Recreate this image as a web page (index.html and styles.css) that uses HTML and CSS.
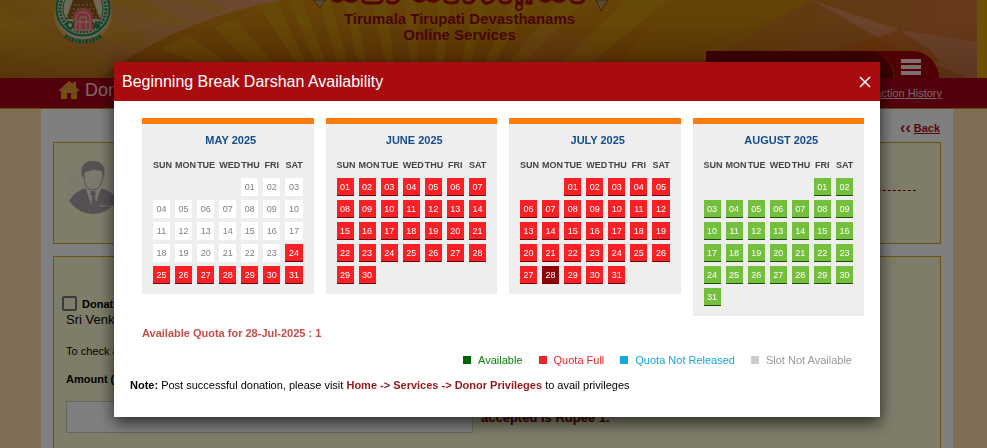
FILE: index.html
```
<!doctype html>
<html lang="en">
<head>
    <title>Tirumala Tirupati Devasthanams Online Services</title>
    <meta charset="utf-8">
    <link rel="stylesheet" href="styles.css">
</head>
<body>
    <!-- banner -->
    <header class="banner">
        <svg class="banner-bg" viewBox="0 0 987 78" preserveAspectRatio="none" aria-hidden="true">
            <defs>
                <linearGradient id="base" x1="0" y1="0" x2="0" y2="1">
                    <stop offset="0" stop-color="#d0880e"/>
                    <stop offset="1" stop-color="#b8680c"/>
                </linearGradient>
                <linearGradient id="left" x1="0" y1="0" x2="1" y2="0">
                    <stop offset="0" stop-color="#c88c1c"/>
                    <stop offset="1" stop-color="#dc906c"/>
                </linearGradient>
                <linearGradient id="right" x1="0" y1="0" x2="1" y2="0">
                    <stop offset="0" stop-color="#b8740c"/>
                    <stop offset="1" stop-color="#d07438"/>
                </linearGradient>
                <linearGradient id="shade" x1="0" y1="0" x2="0" y2="1">
                    <stop offset="0.3" stop-color="#802c00" stop-opacity="0"/>
                    <stop offset="1" stop-color="#802c00" stop-opacity="0.35"/>
                </linearGradient>
            </defs>
            <rect width="987" height="78" fill="url(#base)"/>
            <!-- rays -->
            <g fill="#d09c10" opacity="0.6">
                <path d="M160 48L188 36L230 64H200z"/>
                <path d="M214 27L236 19L274 64H250z"/>
                <path d="M256 0H276L306 64H296z"/>
                <path d="M288 0H302L326 64H316z"/>
                <path d="M318 0H330L348 64H338z"/>
                <path d="M344 0H354L366 64H358z"/>
                <path d="M372 0H386L394 64H386z"/>
                <path d="M404 0H416L418 64H410z"/>
                <path d="M438 0H450L444 64H436z"/>
                <path d="M474 0H488L470 64H462z"/>
                <path d="M514 0H532L494 64H484z"/>
                <path d="M560 0H584L524 64H508z"/>
                <path d="M626 0H668L590 64H560z"/>
            </g>
            <path d="M0 0H282Q180 18 100 78H0z" fill="url(#left)"/>
            <g fill="#d0981c" opacity="0.5">
                <path d="M0 12L0 50L76 78H114L118 64z"/>
                <path d="M22 0H76L150 40L134 52z"/>
                <path d="M108 0H140L190 22L176 28z"/>
                <path d="M176 0H204L230 10L216 14z"/>
            </g>
            <path d="M620 64Q720 44 812 0H987V78H620z" fill="url(#right)"/>
            <path d="M668 0H812L700 64H620z" fill="#c8860c" opacity="0.55"/>
            <path d="M812 0L900 30L987 44V78H968L900 50z" fill="#dc9068" opacity="0.7"/>
            <path d="M900 30L800 62H940L930 50z" fill="#c8600c" opacity="0.6"/>
            <path d="M530 64Q512 48 528 34Q556 20 570 40Q584 28 602 64H592Q584 44 572 56L560 64z" fill="#d88040" opacity="0.35"/>
            <rect width="987" height="78" fill="url(#shade)"/>
            <rect x="977" width="10" height="78" fill="#d89c10"/>
        </svg>

        <svg class="seal" width="60" height="46" viewBox="0 0 60 46" role="img" aria-label="TTD seal">
            <circle cx="30" cy="14" r="29" fill="#e8c48c" opacity="0.5"/>
            <circle cx="30" cy="12" r="27" fill="#d9c9ac"/>
            <circle cx="30" cy="9" r="26.5" fill="none" stroke="#168a58" stroke-width="2"/>
            <circle cx="30" cy="9" r="23" fill="none" stroke="#168a58" stroke-width="3" stroke-dasharray="2 1.4"/>
            <circle cx="30" cy="9" r="20" fill="#e0cfae" stroke="#168a58"/>
            <path d="M20 0h20l7 19H13z" fill="#8c5a1c"/>
            <path d="M17 5h26M16 9h28M15 13h30M14 17h32" stroke="#dca858" stroke-dasharray="2 2"/>
            <path d="M20 31V18q1-10 10-10t10 10v13z" fill="#e8666c"/>
            <path d="M23 29V18q1-6 7-6t7 6v11M27 29V17h6v12M24 22h12M19 30h22" fill="none" stroke="#ffc6ae"/>
            <circle cx="17" cy="25" r="3" fill="#f0dcb8" stroke="#168a58" stroke-width="2"/>
            <path d="M43 21v7m-3-5q3 6 7-1m-7 5h7" fill="none" stroke="#168a58" stroke-width="2"/>
            <path d="M12 36Q30 47 48 36" fill="none" stroke="#168a58" stroke-width="4" stroke-dasharray="3 1 2 1"/>
        </svg>

        <div class="brand">
            <svg class="crest" width="300" height="11" viewBox="0 0 300 11" aria-hidden="true">
                <g fill="none" stroke="#a00c14" stroke-width="3">
                    <path d="M20-3q7 8 14 1q7 7 14 0M54-2q-3 5 4 5h8q7 0 6-5M78-2q-2 5 4 5t7-5M102-3q7 8 14 1q7 7 14 0M136-2q-3 5 5 5t7-5M154-2q-1 5 4 5t7-5"/>
                    <path d="M172-2q1 6 6 5t6-5M190-2q-1 5 5 5t6-5M207-2v5h5v-5M217-2v5h4v-5M228-3q7 8 14 1q7 7 14 0M262-2q-2 5 5 5t7-5"/>
                </g>
                <circle cx="209" cy="7" r="3" fill="none" stroke="#a00c14" stroke-width="2"/>
                <path d="M3 0h12l-5 8zM286 0h12l-7 11z" fill="#b89060" stroke="#7c4c1c"/>
            </svg>
            <div class="brand-name">Tirumala Tirupati Devasthanams</div>
            <div class="brand-name">Online Services</div>
        </div>

        <nav class="menu-tab">
            <span class="menu-user"></span>
            <button class="menu-btn" aria-label="Menu"><i></i><i></i><i></i></button>
        </nav>
    </header>

    <!-- title bar -->
    <div class="title-bar">
        <svg width="22" height="18" viewBox="0 0 22 18" aria-hidden="true">
            <path d="M11 0L0 10h3v8h6v-6h4v6h6v-8h3l-4-4V1h-3v2z" fill="#e09c30"/>
        </svg>
        <h1>Donation</h1>
        <a class="history" href="#">Transaction History</a>
    </div>

    <main class="content">
        <div class="back"><span>‹‹</span><a href="#">Back</a></div>

        <section class="panel donor">
            <svg width="54" height="60" viewBox="0 0 54 60" role="img" aria-label="Donor">
                <circle cx="26" cy="30" r="27" fill="#f4f4dc" opacity="0.6"/>
                <path d="M3 43Q9 33 20 30L27 53L35 30Q47 33 51 43Q41 56 27 56T3 43z" fill="#aca0a4"/>
                <path d="M20 30l7 4l8-4l-8 23z" fill="#eeeedc"/>
                <path d="M25 33h4l1 3l-1 2l2 14l-3 4l-3-4l1-14l-2-2z" fill="#aca0a4"/>
                <path d="M18 16q0 16 9 16t10-16l-2-5H20z" fill="#f4f4dc" stroke="#aca0a4"/>
                <path d="M16 20Q13 3 27 3T38 20l-2-8q-5 2-8-1q-4 3-9 3z" fill="#aca0a4"/>
                <path d="M33 48h14M41 52h4" stroke="#eeeedc"/>
            </svg>
            <span class="dash"></span>
        </section>

        <section class="panel form">
            <label class="scheme"><input type="checkbox"> Donation to</label>
            <p class="trust">Sri Venkateswara Trust</p>
            <p class="check">To check availability</p>
            <label class="amount" for="amount">Amount (INR)</label>
            <div class="amount-row">
                <input type="text" id="amount">
                <span class="hint">accepted is Rupee 1.</span>
            </div>
        </section>
    </main>

    <!-- availability popup -->
    <div class="overlay">
        <div class="modal" role="dialog" aria-labelledby="modal-title">
            <div class="modal-head">
                <h2 id="modal-title">Beginning Break Darshan Availability</h2>
                <button class="close" aria-label="Close">
                    <svg width="12" height="12" viewBox="0 0 12 12"><path d="M1 1l10 10M11 1L1 11" stroke="#fff" stroke-width="1.5"/></svg>
                </button>
            </div>
            <div class="modal-body">
                <div class="calendars" id="calendars"></div>
                <p class="quota">Available Quota for 28-Jul-2025 : 1</p>
                <ul class="legend">
                    <li class="l-available">Available</li>
                    <li class="l-full">Quota Full</li>
                    <li class="l-pending">Quota Not Released</li>
                    <li class="l-none">Slot Not Available</li>
                </ul>
                <p class="note"><b>Note:</b> Post successful donation, please visit <b class="path">Home -&gt; Services -&gt; Donor Privileges</b> to avail privileges</p>
            </div>
        </div>
    </div>

    <script src="script.js"></script>
</body>
</html>
```

FILE: styles.css
```
* {
    box-sizing: border-box;
}

body {
    display: flex;
    flex-direction: column;
    margin: 0;
    font-family: "Liberation Sans", Arial, sans-serif;
    font-size: 11px;
    color: #000;
    background: #ffdeac;
    min-height: 100vh;
}

h1, h2, p, ul {
    margin: 0;
    padding: 0;
    font-weight: normal;
}

button {
    font-family: inherit;
    border: 0;
    padding: 0;
    cursor: pointer;
}

/* banner */
.banner {
    position: relative;
    display: grid;
    grid-template-columns: 1fr auto 1fr;
    height: 78px;
    overflow: hidden;
}

.banner-bg {
    position: absolute;
    inset: 0;
    width: 100%;
    height: 100%;
}

.seal {
    position: relative;
    margin-left: 53px;
}

.brand {
    position: relative;
    text-align: center;
    margin-right: 68px;
}

.crest {
    display: block;
}

.brand-name {
    font-size: 15px;
    font-weight: bold;
    line-height: 16px;
    color: #900c10;
}

.menu-tab {
    position: relative;
    display: flex;
    justify-self: end;
    align-self: end;
    width: 233px;
    height: 27px;
    margin-right: 48px;
    background: #a00008;
    border-radius: 0 32px 0 16px;
}

.menu-user {
    flex: 1;
    background: #780008;
    border-right: 1px solid #a8483c;
    border-radius: 0 32px 0 16px;
}

.menu-btn {
    width: 44px;
    padding-top: 6px;
    background: none;
}

.menu-btn i {
    display: block;
    width: 20px;
    height: 4px;
    margin-bottom: 2px;
    margin-left: 6px;
    background: #ffdcdc;
}

/* title bar */
.title-bar {
    display: flex;
    align-items: center;
    height: 31px;
    padding: 0 45px 6px 58px;
    background: #a80018;
    border-bottom: 1px solid #d89020;
}

.title-bar h1 {
    margin-left: 5px;
    font-size: 18px;
    color: #f0d0d4;
}

.history {
    margin-left: auto;
    padding-top: 6px;
    color: #f0d0d4;
}

/* page */
.content {
    flex: 1;
    display: flex;
    flex-direction: column;
    margin: 0 34px 0 41px;
    padding: 0 12px;
    background: #fff;
}

.back {
    display: flex;
    justify-content: flex-end;
    align-items: center;
    gap: 3px;
    height: 33px;
    padding: 5px 1px 0 0;
    font-weight: bold;
    color: #b0101c;
}

.back span {
    font-size: 16px;
    line-height: 16px;
}

.back a {
    color: inherit;
}

.panel {
    padding: 0 12px;
    background: #fbfbd2;
    border: 1px solid #daa520;
}

.donor {
    display: flex;
    align-items: flex-start;
    justify-content: space-between;
    height: 102px;
    margin-bottom: 12px;
    padding: 15px 24px 0 12px;
}

.form {
    flex: 1;
    border-bottom: 0;
}

.dash {
    width: 200px;
    height: 33px;
    border-bottom: 1px dashed #900000;
}

.scheme {
    display: flex;
    align-items: center;
    gap: 5px;
    margin: 39px 0 0 -4px;
    font-weight: bold;
}

.scheme input {
    appearance: none;
    width: 15px;
    height: 15px;
    margin: 0;
    border: 2px solid #767676;
    border-radius: 2px;
    background: #fff8dc;
}

.trust {
    font-size: 13px;
    line-height: 18px;
}

.check {
    margin-top: 14px;
    line-height: 16px;
}

.amount {
    display: block;
    margin-top: 12px;
    line-height: 16px;
    font-weight: bold;
}

.amount-row {
    display: flex;
    align-items: center;
    gap: 8px;
    margin-top: 14px;
}

.amount-row input {
    width: 407px;
    height: 32px;
    border: 1px solid #ccc;
    background: #fff;
}

.hint {
    font-size: 13px;
    font-weight: bold;
    color: #800000;
}

/* popup */
.overlay {
    position: fixed;
    inset: 0;
    padding: 62px 107px 30px 114px;
    background: rgba(0, 0, 0, 0.5);
}

.modal {
    background: #fff;
    box-shadow: 0 5px 15px rgba(0, 0, 0, 0.7);
}

.modal-head {
    display: flex;
    align-items: center;
    justify-content: space-between;
    height: 39px;
    padding: 0 9px 0 8px;
    background: #a90c0e;
    color: #fff;
}

.modal-head h2 {
    font-size: 16px;
}

.close {
    display: flex;
    background: none;
}

.modal-body {
    padding: 17px 16px 24px;
}

.calendars {
    display: grid;
    grid-template-columns: repeat(4, 1fr);
    align-items: start;
    gap: 12px;
    margin-left: 12px;
}

.calendar {
    padding: 0 6px 6px;
    background: #eee;
    border-top: 6px solid #fc7c08;
}

.calendar table {
    width: 100%;
    table-layout: fixed;
    border-spacing: 5px 4px;
}

.calendar caption {
    padding: 8px 0 0 6px;
    line-height: 16px;
    font-weight: bold;
    color: #144c90;
}

.calendar th {
    height: 22px;
    padding: 4px 0 0;
    font-size: 9px;
    color: #444;
}

.calendar td {
    height: 18px;
    padding: 0;
    font-size: 9px;
    line-height: 18px;
    text-align: center;
}

.calendar .none {
    background: #fff;
    color: #808080;
}

.day {
    display: block;
    width: 100%;
    height: 18px;
    font-size: 9px;
    color: #fff;
}

.full {
    background: #f82024;
    border-bottom: 1px solid #700000;
}

.available {
    background: #74c03c;
    border-bottom: 1px solid #1c5000;
}

.selected {
    background: #900008;
}

.quota {
    margin: 9px 0 0 12px;
    line-height: 16px;
    font-weight: bold;
    color: #c0504c;
}

.legend {
    display: flex;
    justify-content: flex-end;
    gap: 16px;
    margin: 11px 12px 0 0;
    line-height: 16px;
    list-style: none;
}

.legend li {
    display: flex;
    align-items: center;
    gap: 7px;
}

.legend li::before {
    content: "";
    width: 8px;
    height: 8px;
    background: currentColor;
}

.legend .l-available {
    color: #0c800c;
}

.legend .l-available::before {
    background: #006400;
}

.l-full {
    color: #ec2428;
}

.l-pending {
    color: #10a8dc;
}

.legend .l-none {
    color: #989898;
}

.legend .l-none::before {
    background: #ccc;
}

.note {
    margin-top: 9px;
    line-height: 16px;
}

.path {
    color: #94181c;
}
```

FILE: script.js
```
// start = weekday of the 1st, fullFrom = first day with no quota left
var months = [
    { name: 'MAY 2025', start: 4, days: 31, type: 'none', fullFrom: 24 },
    { name: 'JUNE 2025', start: 0, days: 30, type: 'full', fullFrom: 1 },
    { name: 'JULY 2025', start: 2, days: 31, type: 'full', fullFrom: 1, selected: 28 },
    { name: 'AUGUST 2025', start: 5, days: 31, type: 'available', fullFrom: 99 }
];
var week = ['SUN', 'MON', 'TUE', 'WED', 'THU', 'FRI', 'SAT'];

function cell(m, d) {
    if (d < 1 || d > m.days) return '<td></td>';
    var num = (d < 10 ? '0' : '') + d;
    var type = d >= m.fullFrom ? 'full' : m.type;
    if (type == 'none') return '<td class="none">' + num + '</td>';
    if (d == m.selected) type += ' selected';
    return '<td><button class="day ' + type + '">' + num + '</button></td>';
}

var html = '';
for (var m of months) {
    html += '<div class="calendar"><table><caption>' + m.name + '</caption><tr>';
    for (var w of week) html += '<th>' + w + '</th>';
    html += '</tr>';
    for (var d = 1 - m.start; d <= m.days; d += 7) {
        html += '<tr>';
        for (var i = 0; i < 7; i++) html += cell(m, d + i);
        html += '</tr>';
    }
    html += '</table></div>';
}
document.getElementById('calendars').innerHTML = html;
```
